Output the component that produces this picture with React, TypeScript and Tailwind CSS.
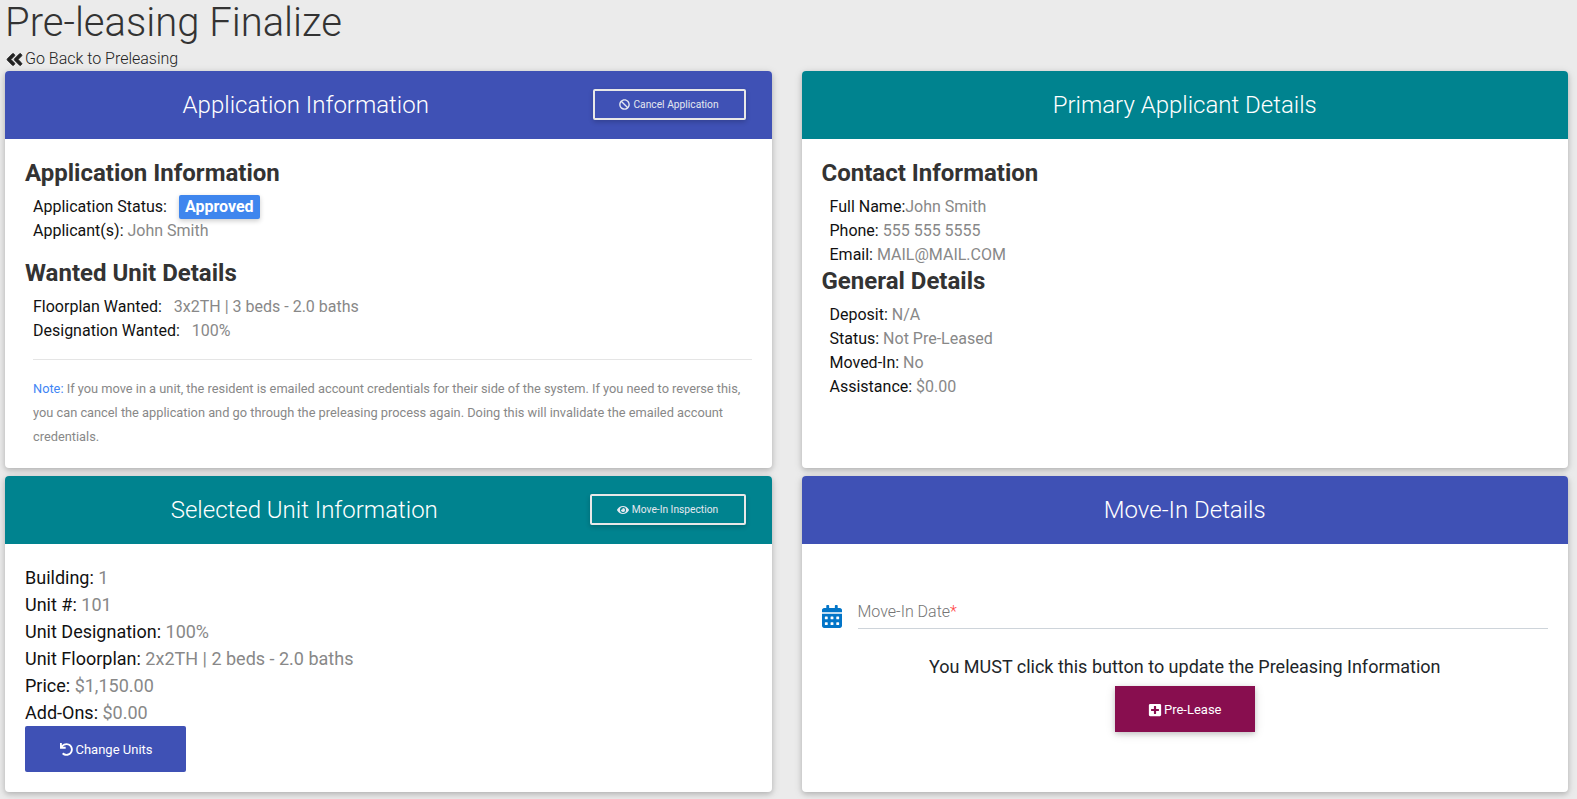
import { FaAngleDoubleLeft, FaBan, FaCalendarAlt, FaEye, FaPlusSquare, FaUndo } from "react-icons/fa";
import type { ReactNode } from "react";

const cardShadow = "shadow-[0_2px_5px_rgba(0,0,0,0.16),0_2px_10px_rgba(0,0,0,0.12)]";

function Card({
  title,
  color,
  action,
  height,
  children,
}: {
  title: string;
  color: string;
  action?: ReactNode;
  height: string;
  children: ReactNode;
}) {
  return (
    <div className={`flex flex-col overflow-hidden rounded-[4px] bg-white ${cardShadow} ${height}`}>
      <div className={`flex h-[68px] shrink-0 items-center text-white ${color}`}>
        <h2 className={`flex-1 text-center text-2xl font-light ${action ? "pl-[14px]" : ""}`}>{title}</h2>
        {action && <div className="mb-[2px] mr-[26px]">{action}</div>}
      </div>
      {children}
    </div>
  );
}

function OutlineButton({ icon, label, width }: { icon: ReactNode; label: string; width: string }) {
  return (
    <button
      className={`flex h-[31px] items-center justify-center gap-[3px] rounded-[2px] border-2 border-[#e8e8e8] pt-px text-[10.24px] text-[#e4e8f0] shadow-[0_2px_5px_rgba(0,0,0,0.2)] ${width}`}
    >
      {icon}
      {label}
    </button>
  );
}

function Row({ label, value }: { label: ReactNode; value: ReactNode }) {
  return (
    <div className="h-6 pl-2 text-base leading-6 text-[#111]">
      {label} <span className="text-[#888]">{value}</span>
    </div>
  );
}

function UnitRow({ label, value }: { label: string; value: string }) {
  return (
    <div className="h-[27px] text-lg leading-[27px] text-[#111]">
      {label}: <span className="text-[#888]">{value}</span>
    </div>
  );
}

export default function App() {
  return (
    <div className="min-h-[799px] overflow-hidden bg-[#ebebeb] pl-[5px] pr-[9px] font-['Roboto',sans-serif] text-[#212529]">
      <h1 className="h-[45px] text-[40px] font-light leading-[45px] text-[#333]">Pre-leasing Finalize</h1>
      <a className="flex h-[26px] items-center gap-px pt-[2px] text-base font-light text-[#222]">
        <FaAngleDoubleLeft className="stroke-current stroke-[24] text-[19px] text-[#222]" />
        Go Back to Preleasing
      </a>
      <div className="grid grid-cols-2 gap-x-[30px] gap-y-2">
        <Card
          title="Application Information"
          color="bg-[#3f51b5]"
          height="h-[397px]"
          action={<OutlineButton icon={<FaBan className="text-[11px]" />} label="Cancel Application" width="w-[153px]" />}
        >
          <div className="px-5 pt-5">
            <h3 className="text-2xl font-bold leading-[29px] text-[#333]">Application Information</h3>
            <div className="mt-[7px] flex h-6 items-center pl-2 text-base text-[#111]">
              Application Status:
              <span className="ml-3 rounded-[2px] bg-[#3f86ee] px-[6px] py-px font-bold leading-[22px] text-white shadow-[0_2px_5px_rgba(0,0,0,0.2)]">
                Approved
              </span>
            </div>
            <Row label="Applicant(s):" value="John Smith" />
            <h3 className="mt-4 text-2xl font-bold leading-[29px] text-[#333]">Wanted Unit Details</h3>
            <div className="mt-[7px]">
              <Row label="Floorplan Wanted:" value={<span className="ml-2">3x2TH | 3 beds - 2.0 baths</span>} />
              <Row label="Designation Wanted:" value={<span className="ml-2">100%</span>} />
            </div>
            <hr className="ml-2 mt-4 border-[#e5e5e5]" />
            <p className="ml-2 mt-[17px] text-[12.8px] leading-6 text-[#888]">
              <span className="text-[#4285f4]">Note:</span> If you move in a unit, the resident is emailed account credentials for their side of the system. If you need to reverse this, you can cancel the application and go through the preleasing process again. Doing this will invalidate the emailed account credentials.
            </p>
          </div>
        </Card>
        <Card title="Primary Applicant Details" color="bg-[#00838f]" height="h-[397px]">
          <div className="px-5 pt-5">
            <h3 className="text-2xl font-bold leading-[29px] text-[#333]">Contact Information</h3>
            <div className="mt-[7px]">
              <div className="h-6 pl-2 text-base leading-6 text-[#111]">
                Full Name:<span className="text-[#888]">John Smith</span>
              </div>
              <Row label="Phone:" value="555 555 5555" />
              <Row label="Email:" value="MAIL@MAIL.COM" />
            </div>
            <h3 className="text-2xl font-bold leading-[29px] text-[#333]">General Details</h3>
            <div className="mt-[7px]">
              <Row label="Deposit:" value="N/A" />
              <Row label="Status:" value="Not Pre-Leased" />
              <Row label="Moved-In:" value="No" />
              <Row label="Assistance:" value="$0.00" />
            </div>
          </div>
        </Card>
        <Card
          title="Selected Unit Information"
          color="bg-[#00838f]"
          height="h-[316px]"
          action={<OutlineButton icon={<FaEye className="text-[12px]" />} label="Move-In Inspection" width="w-[156px]" />}
        >
          <div className="px-5 pt-5">
            <UnitRow label="Building" value="1" />
            <UnitRow label="Unit #" value="101" />
            <UnitRow label="Unit Designation" value="100%" />
            <UnitRow label="Unit Floorplan" value="2x2TH | 2 beds - 2.0 baths" />
            <UnitRow label="Price" value="$1,150.00" />
            <UnitRow label="Add-Ons" value="$0.00" />
            <button className="flex h-[46px] w-[161px] items-center justify-center gap-[2px] rounded-[2px] bg-[#3f51b5] pl-[2px] pt-[2px] text-[13px] text-white">
              <FaUndo className="mb-[2px] text-[13px]" />
              Change Units
            </button>
          </div>
        </Card>
        <Card title="Move-In Details" color="bg-[#3f51b5]" height="h-[316px]">
          <div className="flex flex-col items-center px-5">
            <div className="mt-[52px] flex w-full items-end">
              <FaCalendarAlt className="mb-px mr-4 h-[23px] w-5 text-[#0275c8]" />
              <div className="h-[33px] flex-1 border-b border-[#ced4da] text-base font-light leading-[32px] text-[#757575]">
                Move-In Date<span className="text-[#f44]">*</span>
              </div>
            </div>
            <p className="mt-6 text-lg leading-[27px] text-[#212529]">You MUST click this button to update the Preleasing Information</p>
            <button className="mt-[6px] flex h-[46px] w-[140px] items-center justify-center gap-[2px] bg-[#880e4f] pt-px text-[13px] text-white shadow-[0_2px_5px_rgba(0,0,0,0.16),0_2px_10px_rgba(0,0,0,0.12)]">
              <FaPlusSquare className="text-[14px]" />
              Pre-Lease
            </button>
          </div>
        </Card>
      </div>
    </div>
  );
}
